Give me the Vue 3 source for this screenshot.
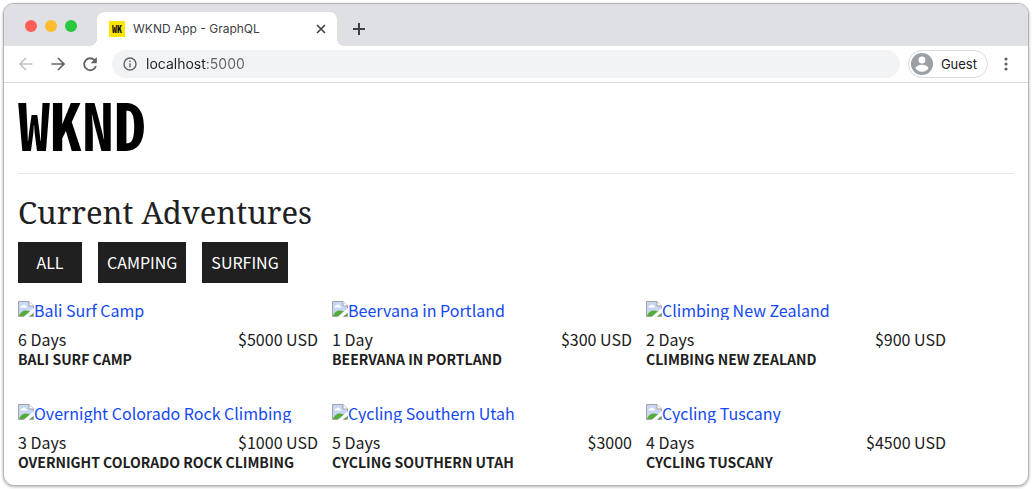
<script setup>
import { ref } from 'vue'

const address = ref('localhost:5000')
const filters = ['All', 'Camping', 'Surfing']
const adventures = [
  { title: 'Bali Surf Camp', length: '6 Days', price: '$5000 USD' },
  { title: 'Beervana in Portland', length: '1 Day', price: '$300 USD' },
  { title: 'Climbing New Zealand', length: '2 Days', price: '$900 USD' },
  { title: 'Overnight Colorado Rock Climbing', length: '3 Days', price: '$1000 USD' },
  { title: 'Cycling Southern Utah', length: '5 Days', price: '$3000' },
  { title: 'Cycling Tuscany', length: '4 Days', price: '$4500 USD' }
]
</script>

<template>
  <div class="window">
    <header class="tabstrip">
      <div class="lights">
        <button class="light red" aria-label="Close window"></button>
        <button class="light yellow" aria-label="Minimize window"></button>
        <button class="light green" aria-label="Zoom window"></button>
      </div>
      <div class="tab">
        <span class="favicon">WK</span>
        <span class="tab-title">WKND App - GraphQL</span>
        <button class="icon-button tab-close" aria-label="Close tab">
          <svg width="10" height="10" viewBox="0 0 10 10"><path d="M1 1l8 8M9 1L1 9" stroke="#3c4043" stroke-width="1.6" /></svg>
        </button>
      </div>
      <button class="icon-button new-tab" aria-label="New tab">
        <svg width="12" height="12" viewBox="0 0 12 12"><path d="M6 0v12M0 6h12" stroke="#3c4043" stroke-width="2" /></svg>
      </button>
    </header>

    <nav class="toolbar" aria-label="Browser">
      <button class="icon-button" aria-label="Back" disabled>
        <svg width="16" height="16" viewBox="0 0 16 16" fill="none" stroke="#bdc1c6" stroke-width="1.5"><path d="M14.500 8H2.500M8 2L2 8l6 6" /></svg>
      </button>
      <button class="icon-button" aria-label="Forward">
        <svg width="16" height="16" viewBox="0 0 16 16" fill="none" stroke="#5f6368" stroke-width="1.7"><path d="M1.500 8h12M8 2l6 6-6 6" /></svg>
      </button>
      <button class="icon-button" aria-label="Reload">
        <svg width="16" height="16" viewBox="0 0 16 16"><path d="M12.600 4.200A6 6 0 1 0 13.900 10" fill="none" stroke="#5f6368" stroke-width="1.8" /><path d="M14.800 1v6.200H8.600z" fill="#5f6368" /></svg>
      </button>
      <div class="omnibox">
        <svg width="14" height="14" viewBox="0 0 14 14"><circle cx="7" cy="7" r="6" fill="none" stroke="#5f6368" stroke-width="1.4" /><path d="M7 6.200v4M7 3.600v1.400" stroke="#5f6368" stroke-width="1.4" /></svg>
        <input v-model="address" class="address" type="text" aria-label="Address" spellcheck="false">
      </div>
      <button class="profile">
        <svg width="22" height="22" viewBox="0 0 22 22"><circle cx="11" cy="11" r="11" fill="#9aa0a6" /><circle cx="11" cy="7" r="3.4" fill="#fff" /><path d="M4.600 15.400c0-2.200 4-3.600 6.400-3.600s6.400 1.400 6.400 3.600c-1.400 2-3.700 3.300-6.400 3.300s-5-1.300-6.400-3.300z" fill="#fff" /></svg>
        Guest
      </button>
      <button class="icon-button menu" aria-label="Menu">
        <svg width="4" height="14" viewBox="0 0 4 14" fill="#5f6368"><circle cx="2" cy="2" r="1.6" /><circle cx="2" cy="7" r="1.6" /><circle cx="2" cy="12" r="1.6" /></svg>
      </button>
    </nav>

    <main class="page">
      <div class="brand">WKND</div>
      <hr class="rule">
      <h1 class="heading">Current Adventures</h1>
      <div class="filters">
        <button v-for="name in filters" :key="name" class="filter">{{ name }}</button>
      </div>
      <ul class="adventures">
        <li v-for="item in adventures" :key="item.title" class="adventure">
          <a class="picture" href="#">
            <svg class="missing" width="16" height="16" viewBox="0 0 16 16">
              <path d="M.5.5H11L15.500 5v10.500H.5z" fill="#c6d6f3" />
              <path d="M2.500 6.500c0-1.500 1-2 2-2 .5-1.500 2.500-1.500 3 0 1 0 1.500 1 1.500 2z" fill="#fff" />
              <path d="M1 15c1-3.500 4-5.500 7-5.500 2.500 0 4.500 1 7 3V15z" fill="#55ac3c" />
              <path d="M.5 15.500V.5H11L15.500 5v10.500z" fill="none" stroke="#a3a3a3" />
              <path d="M11 .5V5h4.500" fill="#fff" stroke="#a3a3a3" />
              <path d="M5.500 16L16 7v4.500L10.500 16z" fill="#fff" />
            </svg>
            <span>{{ item.title }}</span>
          </a>
          <div class="details">
            <span>{{ item.length }}</span>
            <span>{{ item.price }}</span>
          </div>
          <h2 class="title">{{ item.title }}</h2>
        </li>
      </ul>
    </main>
  </div>
</template>

<style>
body {
  margin: 0;
  background: #fff;
}
</style>

<style scoped>
* {
  box-sizing: border-box;
}

button {
  padding: 0;
  border: 0;
  background: none;
  font-family: inherit;
}

.window {
  margin: 3px;
  border: 1px solid #b4b4b4;
  border-radius: 11px;
  overflow: hidden;
  background: #fff;
  box-shadow: 0 1px 3px rgba(0, 0, 0, 0.3);
  font-family: Inter, "Liberation Sans", sans-serif;
}

.tabstrip {
  display: flex;
  align-items: flex-end;
  height: 42px;
  background: #dee0e4;
}

.lights {
  display: flex;
  gap: 8px;
  margin: 0 20px 14px 21px;
}

.light {
  width: 12px;
  height: 12px;
  border-radius: 50%;
}

.red {
  background: #ff5f57;
}

.yellow {
  background: #febc2e;
}

.green {
  background: #28c840;
}

.tab {
  position: relative;
  display: flex;
  align-items: center;
  width: 240px;
  height: 34px;
  padding: 0 11px 0 12px;
  border-radius: 8px 8px 0 0;
  background: #fff;
}

.tab::before,
.tab::after {
  content: "";
  position: absolute;
  bottom: 0;
  width: 8px;
  height: 8px;
}

.tab::before {
  right: 100%;
  background: radial-gradient(circle at 0 0, transparent 8px, #fff 8px);
}

.tab::after {
  left: 100%;
  background: radial-gradient(circle at 100% 0, transparent 8px, #fff 8px);
}

.favicon {
  width: 16px;
  height: 16px;
  background: #ffe600;
  color: #111;
  font: bold 10px/16px "Noto Sans Mono CJK SC", "Liberation Sans", sans-serif;
  text-align: center;
}

.tab-title {
  flex: 1;
  margin-left: 8px;
  color: #3c4043;
  font-size: 12px;
  line-height: 16px;
}

.icon-button {
  display: flex;
  align-items: center;
  justify-content: center;
  width: 16px;
  height: 16px;
}

.tab-close {
  width: 10px;
}

.new-tab {
  margin: 0 0 9px 14px;
}

.toolbar {
  display: flex;
  align-items: center;
  gap: 16px;
  height: 37px;
  padding: 0 20px 0 14px;
  border-bottom: 1px solid #dadce0;
}

.omnibox {
  display: flex;
  flex: 1;
  align-items: center;
  gap: 9px;
  height: 28px;
  margin: 0 -8px 0 -2px;
  padding: 0 11px;
  border-radius: 14px;
  background: #f1f3f4;
}

.address {
  flex: 1;
  min-width: 0;
  padding: 0;
  border: 0;
  outline: 0;
  background: linear-gradient(to right, #202124 60px, #5f6368 60px);
  background-clip: text;
  color: transparent;
  caret-color: #202124;
  font: 14px/20px Inter, "Liberation Sans", sans-serif;
}

.profile {
  display: flex;
  align-items: center;
  gap: 8px;
  height: 28px;
  padding: 0 10px 0 2px;
  border: 1px solid #dadce0;
  border-radius: 14px;
  color: #202124;
  font-size: 13px;
}

.menu {
  width: 4px;
}

.page {
  padding: 16px 14px 13px;
  color: #202020;
  font-family: "Noto Sans CJK SC", "Open Sans", sans-serif;
  font-size: 16px;
  line-height: 19px;
}

.brand {
  color: #000;
  font: 900 64px/48px "Noto Sans Mono CJK SC", "Liberation Sans Narrow", sans-serif;
}

.rule {
  height: 1px;
  margin: 26px 0 16px;
  border: 0;
  background: #e8e8e8;
}

.heading {
  margin: 0 0 8px;
  font: 400 31px/44px "Noto Serif", "Liberation Serif", serif;
}

.filters {
  display: flex;
  gap: 16px;
}

.filter {
  min-width: 64px;
  height: 41px;
  padding: 0 9px 2px;
  background: #202020;
  color: #fff;
  font-size: 16px;
  text-transform: uppercase;
}

.adventures {
  display: grid;
  grid-template-columns: repeat(auto-fill, 300px);
  gap: 35px 14px;
  margin: 18px 0 0;
  padding: 0;
  list-style: none;
}

.picture {
  display: flex;
  height: 19px;
  margin-bottom: 10px;
  overflow: hidden;
  color: #1349f5;
  text-decoration: none;
}

.missing {
  flex: none;
}

.details {
  display: flex;
  justify-content: space-between;
}

.title {
  margin: 0;
  font-size: 14px;
  font-weight: 600;
  line-height: 20px;
  text-transform: uppercase;
}
</style>
